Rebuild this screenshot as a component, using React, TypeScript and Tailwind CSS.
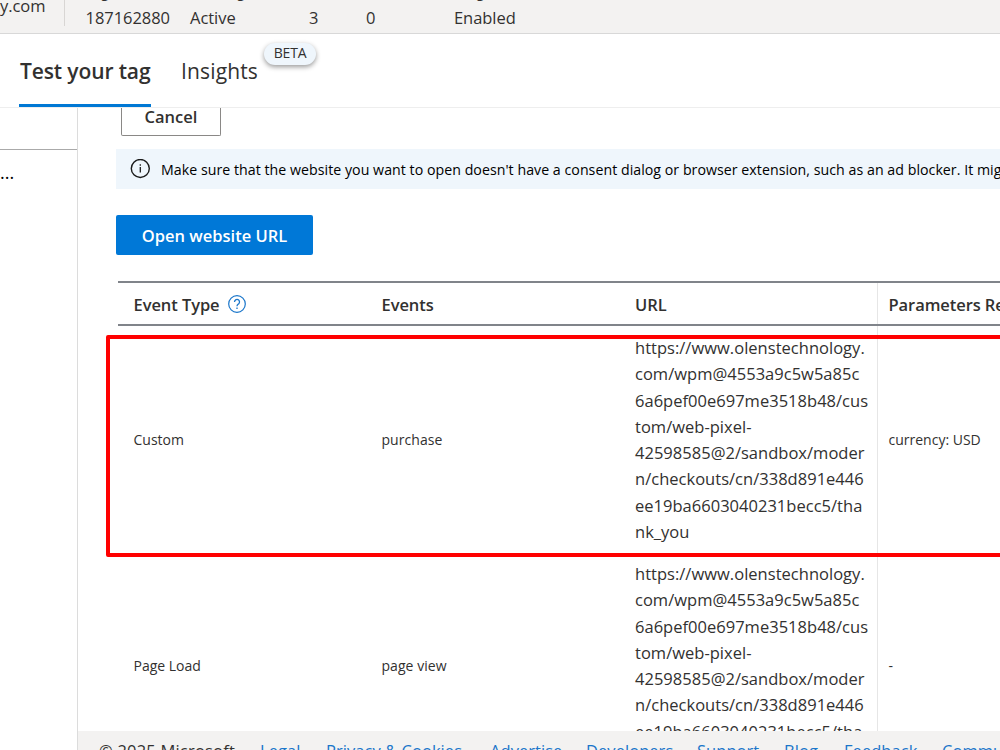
import { clsx } from "clsx";

const STATUS_COLUMNS = [
  { label: "Tag ID", value: "187162880", width: "w-[104.5px]" },
  { label: "Tracking status", value: "Active", width: "w-[119px]" },
  { label: "", value: "3", width: "w-[57px]" },
  { label: "", value: "0", width: "w-[88px]" },
  { label: "Insights", value: "Enabled", width: "w-[90px]" },
];

const URL_LINES = [
  "https://www.olenstechnology.",
  "com/wpm@4553a9c5w5a85c",
  "6a6pef00e697me3518b48/cus",
  "tom/web-pixel-",
  "42598585@2/sandbox/moder",
  "n/checkouts/cn/338d891e446",
  "ee19ba6603040231becc5/tha",
  "nk_you",
];

const ROWS = [
  { type: "Custom", event: "purchase", params: "currency: USD", highlighted: true },
  { type: "Page Load", event: "page view", params: "-", highlighted: false },
];

const FOOTER_LINKS = [
  { label: "Legal", width: "w-[66px]" },
  { label: "Privacy & Cookies", width: "w-[164px]" },
  { label: "Advertise", width: "w-[96px]" },
  { label: "Developers", width: "w-[111px]" },
  { label: "Support", width: "w-[87px]" },
  { label: "Blog", width: "w-[60px]" },
  { label: "Feedback", width: "w-[98px]" },
  { label: "Community", width: "w-[100px]" },
];

function StatusBar() {
  return (
    <header className="flex h-[34px] shrink-0 overflow-hidden border-b border-[#d8d8d8] bg-[#f3f2f1] text-[16.5px] leading-[24px] tracking-[-0.05px]">
      <div className="h-[26px] w-[65px] shrink-0 border-r border-[#d8d6d4]">
        <div className="-mt-[6px]">y.com</div>
      </div>
      <div className="flex pl-[20.5px]">
        {STATUS_COLUMNS.map((col) => (
          <div key={col.value} className={clsx("-mt-[17px] shrink-0 whitespace-nowrap", col.width)}>
            <div className="mb-[5px] h-[18px] text-[14px] leading-[18px]">{col.label}</div>
            <div>{col.value}</div>
          </div>
        ))}
      </div>
    </header>
  );
}

function Tabs() {
  return (
    <nav className="flex h-[74px] shrink-0 border-b border-[#eeeeee] pl-[19px] text-[21px] leading-[30px]">
      <div className="mr-[30px] h-[73px] w-[132px] border-b-[3px] border-[#0078d4] pt-[22px] pl-px font-semibold tracking-[-0.12px] whitespace-nowrap">
        Test your tag
      </div>
      <div className="w-[83px] pt-[22px] tracking-[0.15px]">Insights</div>
      <div className="mt-[9px] flex h-[22px] w-[52px] items-center justify-center rounded-full bg-[#eff6fc] pb-[2px] text-[14px] leading-none tracking-[-0.2px] shadow-[0_2px_5px_rgba(0,0,0,0.4)]">
        BETA
      </div>
    </nav>
  );
}

function InfoIcon() {
  return (
    <svg className="size-5 shrink-0" viewBox="0 0 20 20" fill="none" stroke="#1b1b1b">
      <circle cx="10.3" cy="9.5" r="9" strokeWidth="1.4" />
      <path d="M10.3 8v5.5M10.3 5.2v1.5" strokeWidth="1.3" />
    </svg>
  );
}

function HelpIcon() {
  return (
    <svg className="size-[18px]" viewBox="0 0 18 18" fill="none" stroke="#1a76ca">
      <circle cx="9" cy="9" r="8.3" strokeWidth="1.2" />
      <path d="M6.5 7a2.5 2.5 0 1 1 4.1 1.9C9.5 9.8 9 10.1 9 11.3M9 12.5V14" strokeWidth="1.3" />
    </svg>
  );
}

function EventsTable() {
  return (
    <div className="mt-[26px] ml-[2px]">
      <div className="flex h-[45px] w-[1100px] items-stretch border-y-2 border-[#80848a] text-[16.5px] font-semibold leading-[43px] tracking-[-0.07px]">
        <div className="flex w-[248px] items-center pl-[15.5px]">
          <span className="mr-[8px] pt-px">Event Type</span>
          <HelpIcon />
        </div>
        <div className="w-[253px] pl-[15.5px]">Events</div>
        <div className="w-[259px] border-r border-[#e6e6e6] pl-[16px]">URL</div>
        <div className="pl-[10.5px]">Parameters Received</div>
      </div>
      {ROWS.map((row) => (
        <div
          key={row.type}
          className={clsx(
            "relative flex h-[226px] w-[1100px] items-stretch text-[14px]",
            row.highlighted && "z-10",
          )}
        >
          <div className="flex w-[248px] items-center pl-[15.5px]">{row.type}</div>
          <div className="flex w-[253px] items-center pl-[15.5px] tracking-[0.05px]">{row.event}</div>
          <div className="w-[259px] border-r border-[#e6e6e6] pt-[9px] pl-[16px] text-[16.5px] leading-[26.25px] tracking-[0.02px] whitespace-nowrap">
            {URL_LINES.map((line) => (
              <div key={line}>{line}</div>
            ))}
          </div>
          <div className="flex items-center pl-[10.5px]">{row.params}</div>
          {row.highlighted && (
            <div className="absolute top-[9px] -left-[12px] h-[222px] w-[1120px] rounded-[2px] border-4 border-[#ff0000]" />
          )}
        </div>
      ))}
    </div>
  );
}

function Footer() {
  return (
    <footer className="flex h-[19px] shrink-0 overflow-hidden bg-[#f3f2f1] pt-[8px] pl-[21px] text-[16.5px] leading-[24px] tracking-[0.05px] whitespace-nowrap">
      <span className="w-[161px] shrink-0 tracking-[0.2px]">© 2025 Microsoft</span>
      {FOOTER_LINKS.map((link) => (
        <a key={link.label} className={clsx("shrink-0 text-[#1a76ca]", link.width)}>
          {link.label}
        </a>
      ))}
    </footer>
  );
}

export default function App() {
  return (
    <div className="flex h-[750px] w-[1000px] flex-col overflow-hidden bg-white font-['Open_Sans','Noto_Sans',sans-serif] text-[#323130]">
      <StatusBar />
      <Tabs />
      <div className="flex min-h-0 flex-1">
        <aside className="w-[78px] shrink-0 border-r border-[#dcdcdc]">
          <div className="h-[42px] border-b border-[#aaaaaa]" />
          <div className="pt-[10px] text-[18px] leading-[24px] text-black">...</div>
        </aside>
        <div className="flex min-w-0 flex-1 flex-col">
          <main className="min-h-0 flex-1 overflow-hidden pl-[38px]">
            <div className="ml-[5px] flex h-[28px] w-[100px] justify-center rounded-b-[2px] border border-t-0 border-[#8a8886] text-[16.5px] leading-[18px] font-semibold">
              Cancel
            </div>
            <div className="mt-[13px] flex h-[40px] w-[1100px] items-center bg-[#eff6fc] pl-[14px] text-[14.2px] whitespace-nowrap text-black">
              <InfoIcon />
              <span className="ml-[11px] pt-[2px] tracking-[0.03px]">
                Make sure that the website you want to open doesn't have a consent dialog or browser extension, such as an ad blocker. It might
              </span>
            </div>
            <button className="mt-[26px] block h-[40px] w-[197px] rounded-[2px] bg-[#0078d7] pt-[2px] text-[16.5px] font-semibold text-white">
              Open website URL
            </button>
            <EventsTable />
          </main>
          <Footer />
        </div>
      </div>
    </div>
  );
}
